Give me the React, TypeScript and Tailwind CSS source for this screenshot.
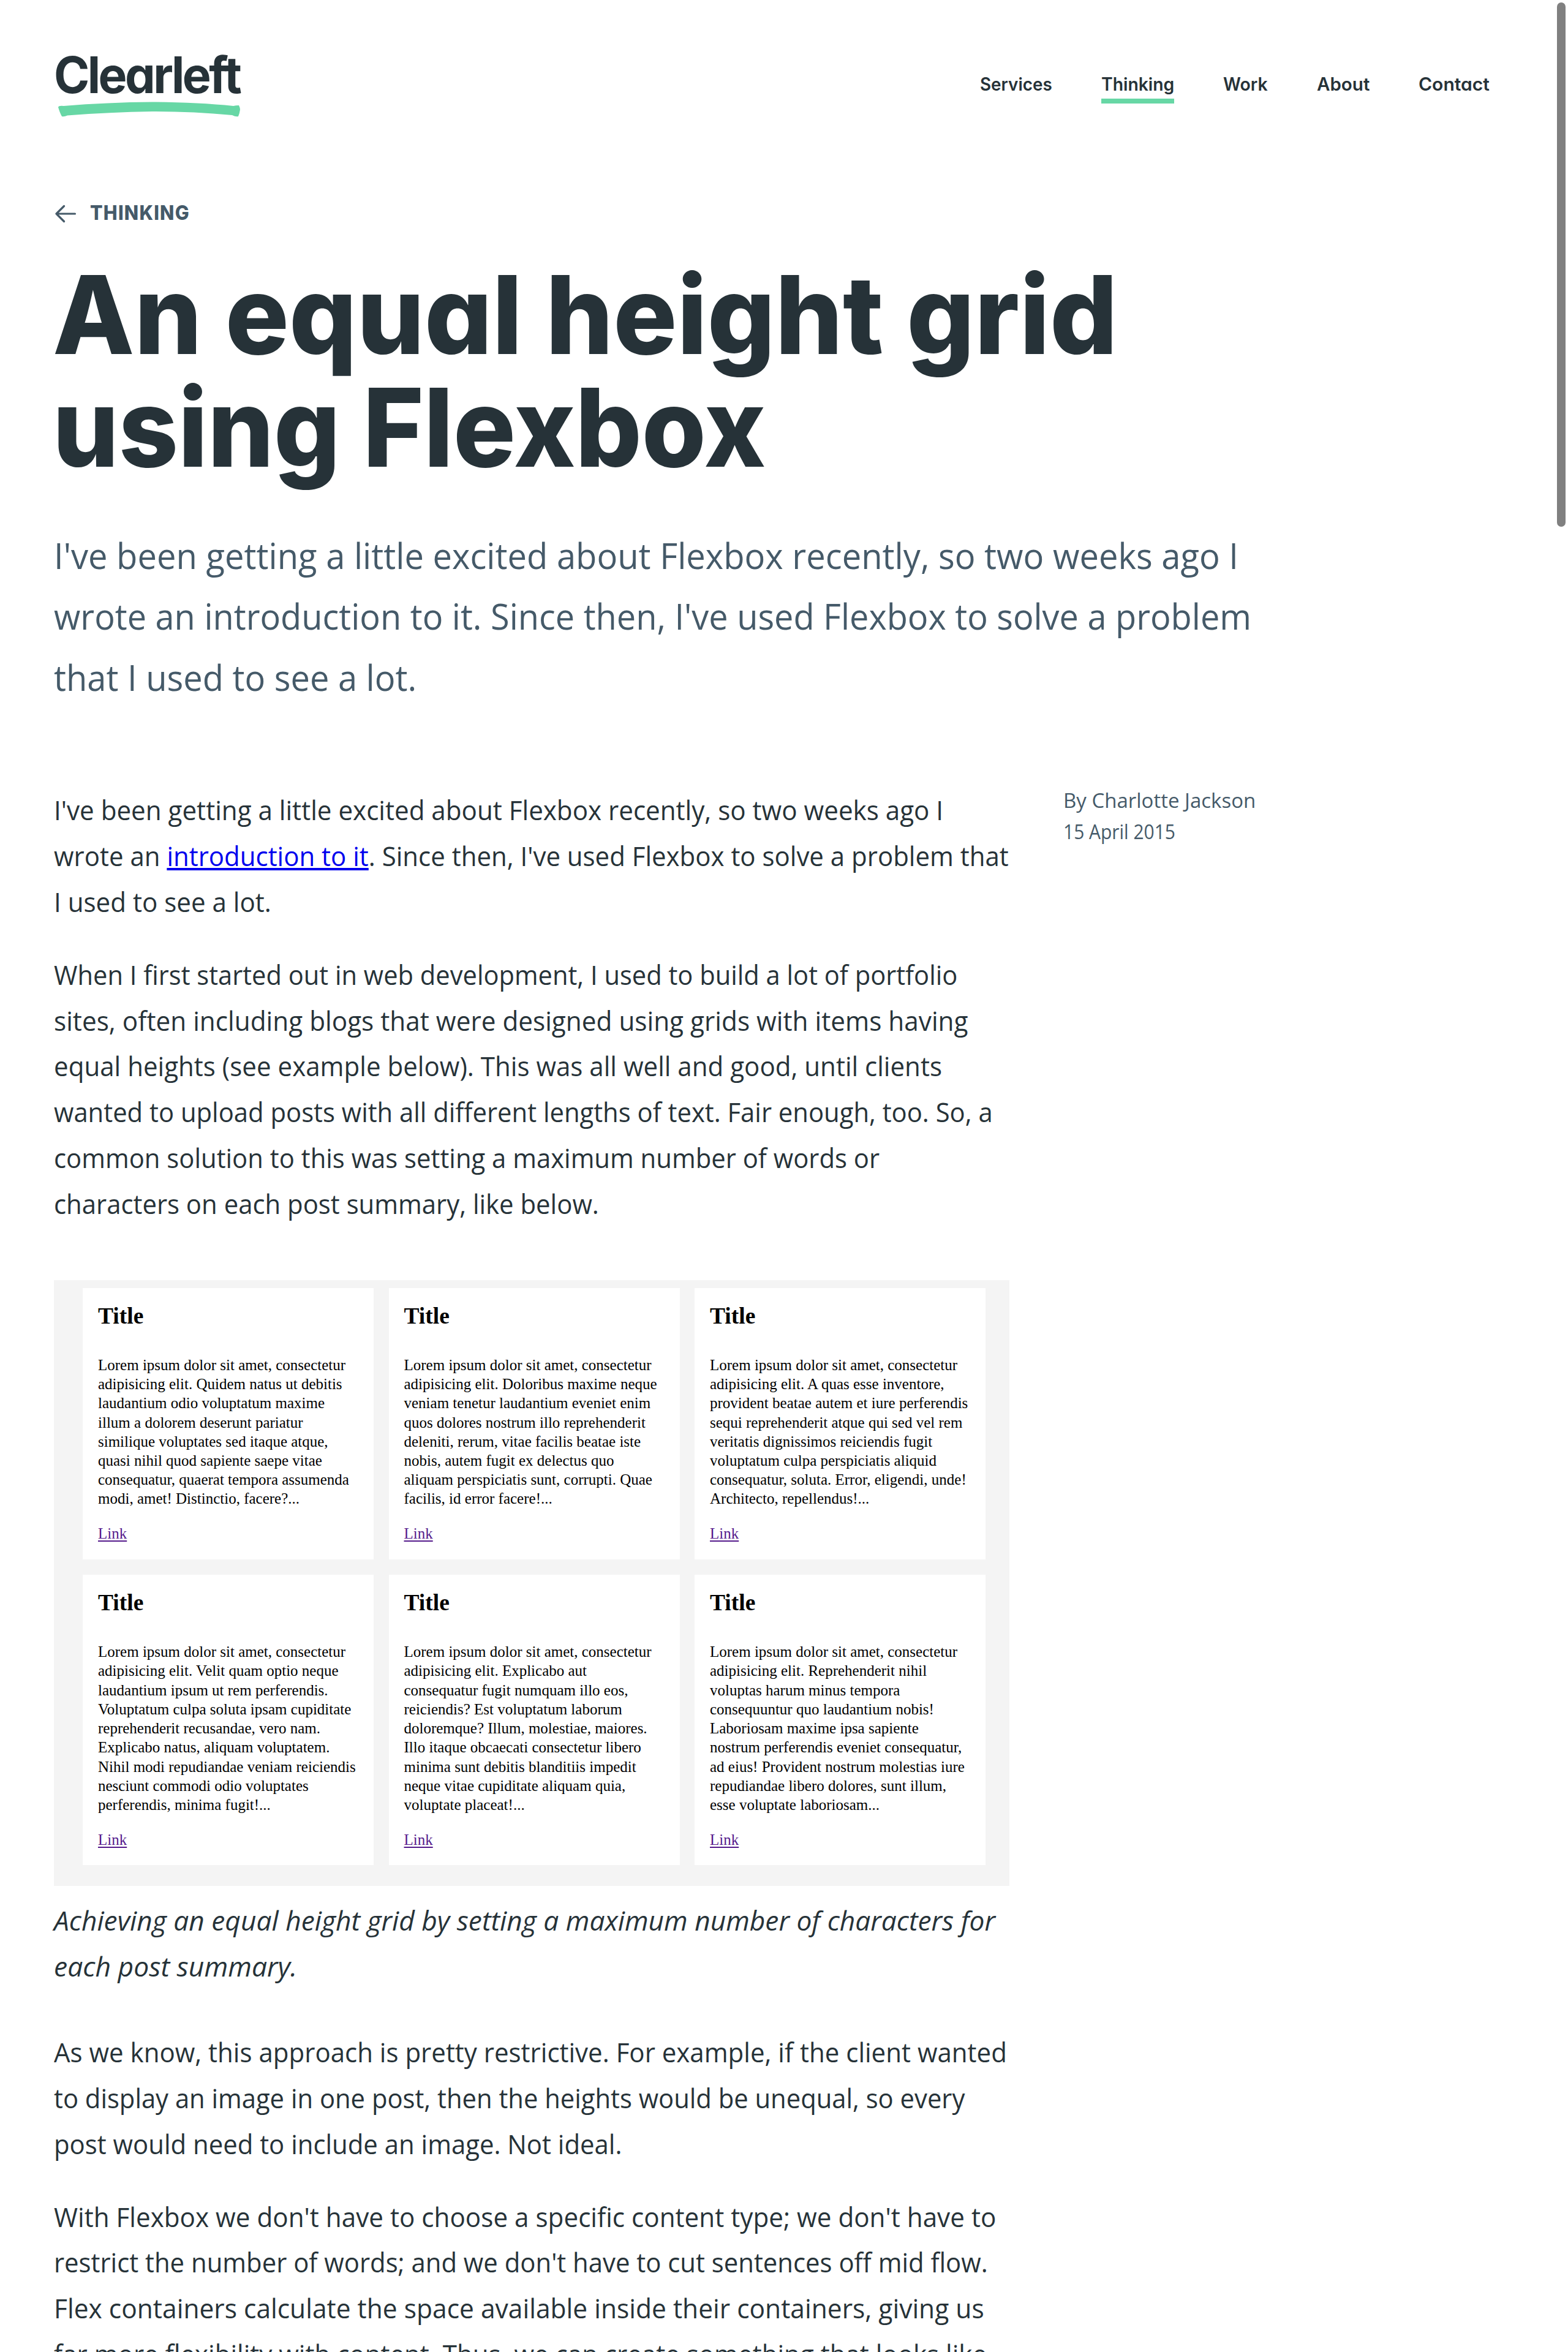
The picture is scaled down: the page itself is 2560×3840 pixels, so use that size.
import { useLayoutEffect, useRef, useState, type ReactNode } from "react";

/* A line of text set to an exact measure by condensing or widening its glyphs. */
function Line({ w, children, className = "" }: { w: number; children: ReactNode; className?: string }) {
  const ref = useRef<HTMLSpanElement>(null);
  const [scale, setScale] = useState(1);
  useLayoutEffect(() => {
    if (ref.current) setScale(w / ref.current.scrollWidth);
  }, [w]);
  return (
    <span className={`block ${className}`} style={{ width: w }}>
      <span
        ref={ref}
        className="block w-max origin-left whitespace-nowrap"
        style={{ transform: `scaleX(${scale})` }}
      >
        {children}
      </span>
    </span>
  );
}

const nav = [
  { label: "Services", w: 118 },
  { label: "Thinking", w: 119, active: true },
  { label: "Work", w: 73 },
  { label: "About", w: 86 },
  { label: "Contact", w: 116 },
];

const rows = [
  [
    ["Lorem ipsum dolor sit amet, consectetur", "adipisicing elit. Quidem natus ut debitis", "laudantium odio voluptatum maxime", "illum a dolorem deserunt pariatur", "similique voluptates sed itaque atque,", "quasi nihil quod sapiente saepe vitae", "consequatur, quaerat tempora assumenda", "modi, amet! Distinctio, facere?..."],
    ["Lorem ipsum dolor sit amet, consectetur", "adipisicing elit. Doloribus maxime neque", "veniam tenetur laudantium eveniet enim", "quos dolores nostrum illo reprehenderit", "deleniti, rerum, vitae facilis beatae iste", "nobis, autem fugit ex delectus quo", "aliquam perspiciatis sunt, corrupti. Quae", "facilis, id error facere!..."],
    ["Lorem ipsum dolor sit amet, consectetur", "adipisicing elit. A quas esse inventore,", "provident beatae autem et iure perferendis", "sequi reprehenderit atque qui sed vel rem", "veritatis dignissimos reiciendis fugit", "voluptatum culpa perspiciatis aliquid", "consequatur, soluta. Error, eligendi, unde!", "Architecto, repellendus!..."],
  ],
  [
    ["Lorem ipsum dolor sit amet, consectetur", "adipisicing elit. Velit quam optio neque", "laudantium ipsum ut rem perferendis.", "Voluptatum culpa soluta ipsam cupiditate", "reprehenderit recusandae, vero nam.", "Explicabo natus, aliquam voluptatem.", "Nihil modi repudiandae veniam reiciendis", "nesciunt commodi odio voluptates", "perferendis, minima fugit!..."],
    ["Lorem ipsum dolor sit amet, consectetur", "adipisicing elit. Explicabo aut", "consequatur fugit numquam illo eos,", "reiciendis? Est voluptatum laborum", "doloremque? Illum, molestiae, maiores.", "Illo itaque obcaecati consectetur libero", "minima sunt debitis blanditiis impedit", "neque vitae cupiditate aliquam quia,", "voluptate placeat!..."],
    ["Lorem ipsum dolor sit amet, consectetur", "adipisicing elit. Reprehenderit nihil", "voluptas harum minus tempora", "consequuntur quo laudantium nobis!", "Laboriosam maxime ipsa sapiente", "nostrum perferendis eveniet consequatur,", "ad eius! Provident nostrum molestias iure", "repudiandae libero dolores, sunt illum,", "esse voluptate laboriosam..."],
  ],
];

function Card({ lines }: { lines: string[] }) {
  return (
    <div className="w-[475px] bg-white px-[25px] pt-[24.500px] pb-[26.500px] text-black">
      <h2 className="text-[37.5px] leading-[44px] font-bold">Title</h2>
      <p className="mt-[42px] text-[25px] leading-[31.2px] whitespace-nowrap">
        {lines.map((l) => (
          <span key={l} className="block">{l}</span>
        ))}
      </p>
      <a className="mt-[25.4px] block w-max text-[25px] leading-[31.2px] text-[#551a8b] underline decoration-2 underline-offset-[3px]">
        Link
      </a>
    </div>
  );
}

export default function App() {
  return (
    <div className="relative h-[3840px] w-[2560px] overflow-hidden bg-white pl-[88px] font-['Open_Sans',sans-serif] font-[450] text-[#263238]">
      <header className="flex h-[328px] items-start justify-between pr-[128px] font-['Inter',sans-serif] [font-feature-settings:'cv11']">
        <div className="pt-20">
          <Line w={303} className="text-[82px] leading-[86px] font-bold tracking-[-0.045em]">Clearleft</Line>
          <svg className="ml-[7px] block" width="298" height="26" viewBox="0 0 298 26" fill="#67d7a5">
            <path d="M0 9 Q1 6 9 7 Q80 1 154 0.5 Q228 1 286 7 Q290 6 295 6 Q297 10 297 13 Q296 20 294 24 Q290 25 284 22 Q220 16 154 16 Q84 17 15 22.500 Q10 25 6 24 Q3 19 0 9Z" />
          </svg>
        </div>
        <nav className="flex gap-20 pt-[117px] text-[29.5px] leading-10 font-semibold">
          {nav.map((n) => (
            <a key={n.label} className={n.active ? "border-b-8 border-[#67d7a5] pb-1" : ""}>
              <Line w={n.w}>{n.label}</Line>
            </a>
          ))}
        </nav>
      </header>

      <a className="flex h-10 items-center gap-[22px] font-['Inter',sans-serif] text-[32px] leading-10 font-extrabold text-[#455a69]">
        <svg className="mt-0.5 ml-0.5 block" width="35" height="30" viewBox="0 0 35 30" fill="none" stroke="#455a69" strokeWidth="3.2" strokeLinecap="round" strokeLinejoin="round">
          <path d="M2 15H32.500M14.500 2.500L2 15L14.500 27.500" />
        </svg>
        <Line w={163} className="tracking-[0.04em]">THINKING</Line>
      </a>

      <h1 className="mt-[54px] -ml-0.5 font-['Inter',sans-serif] text-[177px] leading-[184px] font-extrabold [font-feature-settings:'cv11']">
        <Line w={1739}>An equal height grid</Line>
        <Line w={1164}>using Flexbox</Line>
      </h1>

      <p className="mt-[67px] text-[58.4px] leading-[99.3px] text-[#455a69]">
        <Line w={1934}>I've been getting a little excited about Flexbox recently, so two weeks ago I</Line>
        <Line w={1955}>wrote an introduction to it. Since then, I've used Flexbox to solve a problem</Line>
        <Line w={592}>that I used to see a lot.</Line>
      </p>

      <div className="mt-[126.500px] flex gap-[88px]">
        <article className="w-[1560px] pt-[4px] text-[44px] leading-[74.8px]">
          <p>
            <Line w={1452}>I've been getting a little excited about Flexbox recently, so two weeks ago I</Line>
            <Line w={1559}>
              wrote an{" "}
              <a className="text-[#0000ee] underline decoration-4 underline-offset-[3px]">introduction to it</a>. Since then, I've used Flexbox to solve a problem that
            </Line>
            <Line w={355}>I used to see a lot.</Line>
          </p>
          <p className="mt-11">
            <Line w={1475}>When I first started out in web development, I used to build a lot of portfolio</Line>
            <Line w={1492}>sites, often including blogs that were designed using grids with items having</Line>
            <Line w={1450}>equal heights (see example below). This was all well and good, until clients</Line>
            <Line w={1533}>wanted to upload posts with all different lengths of text. Fair enough, too. So, a</Line>
            <Line w={1348}>common solution to this was setting a maximum number of words or</Line>
            <Line w={890}>characters on each post summary, like below.</Line>
          </p>
          <figure className="mt-[87px]">
            <div className="flex h-[989px] flex-col gap-[25px] bg-[#f4f4f4] pt-[13px] pl-[47px] font-['Liberation_Serif',serif] font-normal">
              {rows.map((r, i) => (
                <div key={i} className="flex gap-[24.500px]">
                  {r.map((c, j) => (
                    <Card key={j} lines={c} />
                  ))}
                </div>
              ))}
            </div>
            <figcaption className="mt-[19.500px] italic">
              <Line w={1537}>Achieving an equal height grid by setting a maximum number of characters for</Line>
              <Line w={397}>each post summary.</Line>
            </figcaption>
          </figure>
          <p className="mt-[65.500px]">
            <Line w={1556}>As we know, this approach is pretty restrictive. For example, if the client wanted</Line>
            <Line w={1487}>to display an image in one post, then the heights would be unequal, so every</Line>
            <Line w={927}>post would need to include an image. Not ideal.</Line>
          </p>
          <p className="mt-11">
            <Line w={1538}>With Flexbox we don't have to choose a specific content type; we don't have to</Line>
            <Line w={1525}>restrict the number of words; and we don't have to cut sentences off mid flow.</Line>
            <Line w={1519}>Flex containers calculate the space available inside their containers, giving us</Line>
            <Line w={1523}>far more flexibility with content. Thus, we can create something that looks like</Line>
          </p>
        </article>
        <aside className="text-[32.600px] leading-[51px] text-[#455a69]">
          <Line w={314}>By Charlotte Jackson</Line>
          <Line w={183}>15 April 2015</Line>
        </aside>
      </div>

      <div className="absolute top-1 left-[2542px] h-[856px] w-3.5 rounded-full bg-[#808080]" />
    </div>
  );
}
